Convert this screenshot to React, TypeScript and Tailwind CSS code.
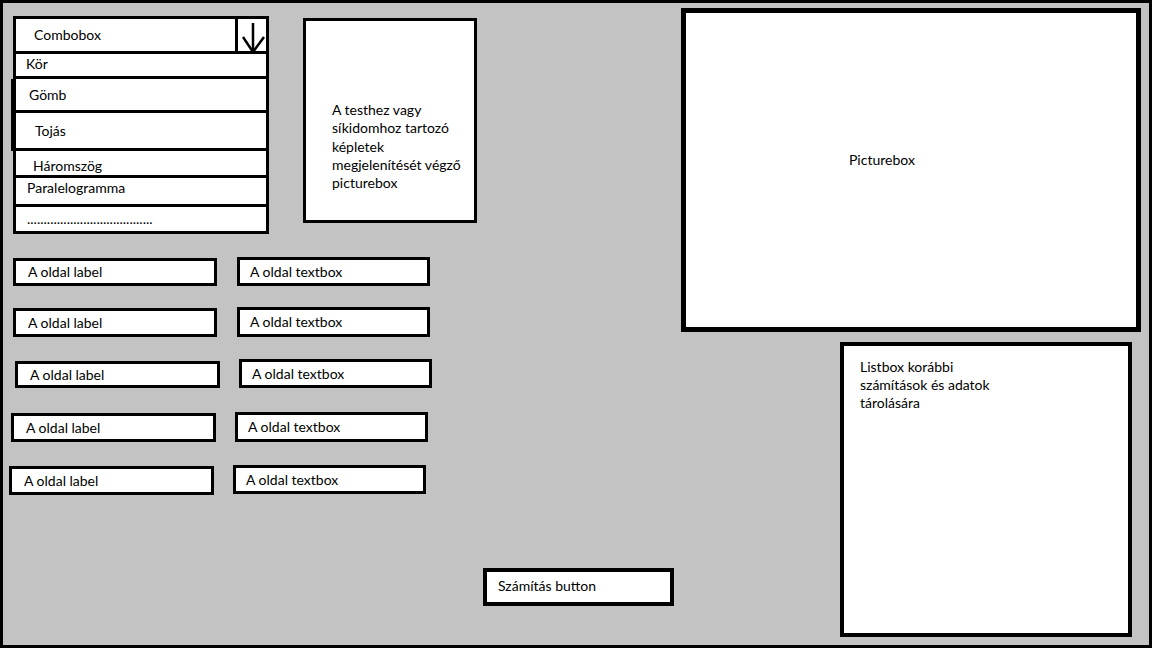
import React from 'react';

const font = { fontFamily: 'Lato, "Open Sans", sans-serif' };

function ArrowDown() {
    return (
        <svg width="30" height="35" viewBox="0 0 30 35" className="block">
            <line x1="15" y1="4" x2="15" y2="35" stroke="black" strokeWidth="2.5" />
            <polyline points="5,18 15,33 26,18" fill="none" stroke="black" strokeWidth="2.5" />
        </svg>
    );
}

function Combobox() {
    return (
        <div className="w-[256px] border-[3px] border-black bg-white text-[14px] leading-[18px]">
            <div className="flex h-[35px] border-b-[3px] border-black">
                <div className="flex-1 flex items-center pl-[18px]">Combobox</div>
                <div className="w-[31px] border-l-[3px] border-black overflow-hidden">
                    <ArrowDown />
                </div>
            </div>
            <div className="h-[25px] border-b-[3px] border-black pl-[10px] pt-[1px]">Kör</div>
            <div className="h-[34px] border-b-[3px] border-l-[3px] border-black -ml-[5px] pl-[15px] flex items-center">Gömb</div>
            <div className="h-[38px] border-b-[3px] border-l-[3px] border-black -ml-[5px] pl-[21px] flex items-center">Tojás</div>
            <div className="h-[27px] border-b-[3px] border-black pl-[17px] pt-[6px]">Háromszög</div>
            <div className="h-[29px] border-b-[3px] border-black pl-[11px] pt-[1px]">Paralelogramma</div>
            <div className="h-[24px] pl-[11px] pt-[3px]">......................................</div>
        </div>
    );
}

type Row = {
    row: string;
    label: string;
    box: string;
};

const rows: Row[] = [
    { row: 'mt-[23px] ml-[10px] gap-[20px]', label: 'mt-[1px] w-[204px] h-[28px]', box: 'w-[193px] h-[29px]' },
    { row: 'mt-[21px] ml-[10px] gap-[20px]', label: 'mt-[1px] w-[204px] h-[29px]', box: 'w-[193px] h-[30px]' },
    { row: 'mt-[22px] ml-[12px] gap-[19px]', label: 'mt-[2px] w-[205px] h-[27px]', box: 'w-[193px] h-[29px]' },
    { row: 'mt-[24px] ml-[8px] gap-[19px]', label: 'mt-[1px] w-[205px] h-[29px]', box: 'w-[193px] h-[30px]' },
    { row: 'mt-[23px] ml-[6px] gap-[19px]', label: 'mt-[1px] w-[205px] h-[29px]', box: 'w-[193px] h-[29px]' },
];

export default function App() {
    return (
        <div
            className="w-[1152px] h-[648px] border-[3px] border-black bg-[#c3c3c3] flex text-black text-[14px] leading-[18px]"
            style={font}
        >
            {/* bal oldal: combobox, képlet doboz, címkék */}
            <div className="w-[474px] shrink-0 flex flex-col pt-[13px]">
                <div className="flex items-start">
                    <div className="ml-[10px]">
                        <Combobox />
                    </div>
                    <div className="ml-[34px] mt-[2px] w-[174px] h-[205px] border-[3px] border-black bg-white pl-[26px] pt-[80px] leading-[18.3px]">
                        A testhez vagy
                        <br />
                        síkidomhoz tartozó
                        <br />
                        képletek
                        <br />
                        megjelenítését végző
                        <br />
                        picturebox
                    </div>
                </div>

                {rows.map((r, i) => (
                    <div key={i} className={'flex items-start ' + r.row}>
                        <div className={'border-[3px] border-black bg-white pl-[12px] flex items-center ' + r.label}>
                            A oldal label
                        </div>
                        <div className={'border-[3px] border-black bg-white pl-[10px] flex items-center ' + r.box}>
                            A oldal textbox
                        </div>
                    </div>
                ))}
            </div>

            {/* gomb */}
            <div className="flex flex-col justify-end pb-[39px] ml-[6px]">
                <button className="w-[191px] h-[38px] border-[4px] border-black bg-white text-left pl-[11px] pb-[2px]">
                    Számítás button
                </button>
            </div>

            {/* jobb oldal */}
            <div className="ml-[7px] pt-[5px] flex flex-col">
                <div className="w-[460px] h-[324px] border-[5px] border-black bg-white pl-[163px] pt-[138px]">
                    Picturebox
                </div>
                <div className="ml-[159px] mt-[10px] w-[292px] h-[295px] border-[4px] border-black bg-white pl-[16px] pt-[12px]">
                    Listbox korábbi
                    <br />
                    számítások és adatok
                    <br />
                    tárolására
                </div>
            </div>
        </div>
    );
}
